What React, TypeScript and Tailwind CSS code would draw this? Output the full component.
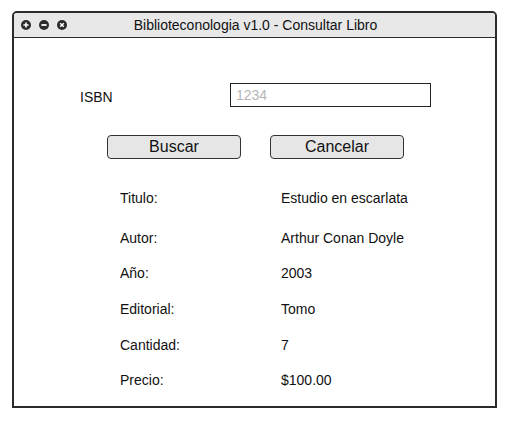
import React from "react";

const font = { fontFamily: '"Liberation Sans", Arial, Helvetica, sans-serif' };

function CircleIcon({ kind }: { kind: "plus" | "minus" | "x" }) {
  return (
    <svg width="10" height="10" viewBox="0 0 10 10" className="block">
      <circle cx="5" cy="5" r="5" fill="#2b2b2b" />
      {kind === "plus" && (
        <path d="M5 2.4V7.6M2.4 5H7.6" stroke="#fff" strokeWidth="1.6" />
      )}
      {kind === "minus" && <path d="M2.4 5H7.6" stroke="#fff" strokeWidth="1.8" />}
      {kind === "x" && (
        <path d="M3.2 3.2L6.8 6.8M6.8 3.2L3.2 6.8" stroke="#fff" strokeWidth="1.5" />
      )}
    </svg>
  );
}

const rows: { label: string; value: string; h: string; mt: string }[] = [
  { label: "Titulo:", value: "Estudio en escarlata", h: "h-[36px]", mt: "mt-[21px]" },
  { label: "Autor:", value: "Arthur Conan Doyle", h: "h-[36px]", mt: "mt-[4px]" },
  { label: "Año:", value: "2003", h: "h-[35px]", mt: "mt-0" },
  { label: "Editorial:", value: "Tomo", h: "h-[36px]", mt: "mt-0" },
  { label: "Cantidad:", value: "7", h: "h-[36px]", mt: "mt-0" },
  { label: "Precio:", value: "$100.00", h: "h-[35px]", mt: "mt-0" },
];

export default function App() {
  return (
    <div className="w-[513px] h-[421px] bg-white overflow-hidden" style={font}>
      <div className="ml-[12px] mt-[11px] w-[485px] h-[397px] border-2 border-[#2b2b2b] rounded-t-[5px] flex flex-col text-[#111]">
        <div className="h-[25px] shrink-0 bg-[#e8e8e8] border-b border-[#2b2b2b] rounded-t-[3px] flex items-center relative">
          <div className="flex items-center gap-[8px] pl-[7px]">
            <CircleIcon kind="plus" />
            <CircleIcon kind="minus" />
            <CircleIcon kind="x" />
          </div>
          <div className="absolute inset-0 flex items-center justify-center text-[14px] pl-[2px]">
            Biblioteconologia v1.0 - Consultar Libro
          </div>
        </div>

        <div className="mt-[45px] h-[24px] flex items-center">
          <div className="w-[216px] pl-[66px] pt-[5px] text-[14px]">ISBN</div>
          <div className="w-[201px] h-[24px] border border-[#222] flex items-center pl-[5px] text-[14px] text-[#b5b5b5]">
            1234
          </div>
        </div>

        <div className="mt-[28px] flex pl-[93px] gap-[29px]">
          <div className="w-[134px] h-[24px] rounded-[4px] border border-[#333] bg-[#e6e6e6] flex items-center justify-center text-[16px]">
            Buscar
          </div>
          <div className="w-[134px] h-[24px] rounded-[4px] border border-[#333] bg-[#e6e6e6] flex items-center justify-center text-[16px]">
            Cancelar
          </div>
        </div>

        {rows.map((r) => (
          <div key={r.label} className={`${r.h} ${r.mt} flex items-center text-[14px]`}>
            <div className="w-[267px] pl-[106px]">{r.label}</div>
            <div>{r.value}</div>
          </div>
        ))}
      </div>
    </div>
  );
}
